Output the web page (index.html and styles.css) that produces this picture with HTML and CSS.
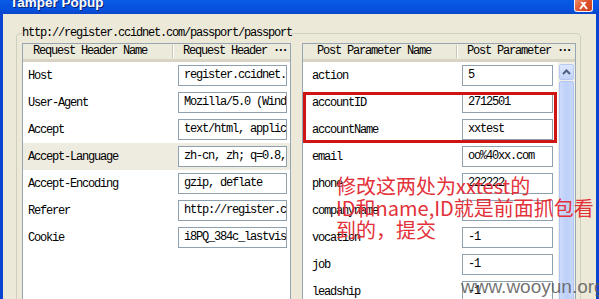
FILE: index.html
```html
<!DOCTYPE html>
<html lang="zh-CN">
<head>
    <meta charset="UTF-8">
    <title>Tamper Popup</title>
    <link rel="stylesheet" href="styles.css">
</head>
<body>
    <div class="win">
        <div class="titlebar">
            <span class="title">Tamper Popup</span>
            <span class="close">
                <svg width="11" height="9" viewBox="0 0 11 9"><path d="M2 -2 L9 7 M9 -2 L2 7" stroke="#fff" stroke-width="2" fill="none"/></svg>
            </span>
        </div>

        <div class="frame">
            <fieldset class="group">
                <legend>http://register.ccidnet.com/passport/passport</legend>
                <div class="panels">
                    <div class="panel left">
                        <div class="head">
                            <div class="hc first">Request Header Name</div>
                            <div class="hc">Request Header <b>···</b></div>
                        </div>
                        <div class="row"><div class="name">Host</div><div class="val">register.ccidnet.com</div></div>
                        <div class="row"><div class="name">User-Agent</div><div class="val">Mozilla/5.0 (Windows NT 5.1)</div></div>
                        <div class="row"><div class="name">Accept</div><div class="val">text/html, application/xhtml+xml</div></div>
                        <div class="row sel"><div class="name">Accept-Language</div><div class="val">zh-cn, zh; q=0.8, en-us</div></div>
                        <div class="row"><div class="name">Accept-Encoding</div><div class="val">gzip,  deflate</div></div>
                        <div class="row"><div class="name">Referer</div><div class="val">http://register.ccidnet.com/</div></div>
                        <div class="row"><div class="name">Cookie</div><div class="val">i8PQ_384c_lastvisit=1354</div></div>
                    </div>

                    <div class="panel right">
                        <div class="head">
                            <div class="hc first">Post Parameter Name</div>
                            <div class="hc">Post Parameter <b>···</b></div>
                        </div>
                        <div class="pbody">
                            <div class="rows">
                                <div class="row"><div class="name">action</div><div class="val">5</div></div>
                                <div class="row"><div class="name">accountID</div><div class="val">2712501</div></div>
                                <div class="row"><div class="name">accountName</div><div class="val">xxtest</div></div>
                                <div class="row"><div class="name">email</div><div class="val">oo%40xx.com</div></div>
                                <div class="row"><div class="name">phone</div><div class="val">222222</div></div>
                                <div class="row"><div class="name">companyname</div><div class="val"></div></div>
                                <div class="row"><div class="name">vocation</div><div class="val">-1</div></div>
                                <div class="row"><div class="name">job</div><div class="val">-1</div></div>
                                <div class="row"><div class="name">leadship</div><div class="val">-1</div></div>
                            </div>
                            <div class="sb">
                                <div class="sb-up">
                                    <svg width="9" height="6" viewBox="0 0 9 6"><path d="M1 5 L4.5 1.5 L8 5" stroke="#4d6185" stroke-width="2" fill="none"/></svg>
                                </div>
                                <div class="sb-thumb"></div>
                            </div>
                        </div>
                    </div>
                </div>
            </fieldset>
        </div>

        <div class="mark-box"></div>
        <p class="note">修改这两处为xxtest的<br>ID和name,ID就是前面抓包看<br>到的，提交</p>
        <div class="watermark">www.wooyun.org</div>
    </div>
</body>
</html>
```

FILE: styles.css
```css
body { margin: 0; background: #ece9d8; overflow: hidden; }
.win { position: relative; width: 599px; height: 299px; display: flex; flex-direction: column; overflow: hidden; font-family: "Liberation Mono", "Noto Sans CJK SC", monospace; font-size: 12px; letter-spacing: -1.2px; color: #000; }

.titlebar { height: 14px; flex: none; display: flex; background: linear-gradient(#0a5ae8, #0650dc 70%, #0a46c8); }
.title { margin: -4px 0 0 10px; font-family: "Liberation Sans", sans-serif; font-weight: bold; font-size: 13.5px; line-height: 13px; letter-spacing: 0; color: #fff; text-shadow: 1px 1px #0a1f6e; }
.close { margin: 0 6px 0 auto; width: 19px; height: 12px; box-sizing: border-box; border: 1px solid #f2f2f2; border-top: 0; border-radius: 0 0 3px 3px; background: linear-gradient(135deg, #f08a6a, #e0522c 50%, #c8401c); display: flex; justify-content: center; align-items: flex-end; }

.frame { flex: 1; border-left: 3px solid #0a44d0; border-right: 3px solid #0a44d0; background: #ece9d8; }

.group { margin: 12px 15px 0 13px; padding: 3px 0 0 5px; border: 1px solid #d0d0bf; border-radius: 4px; height: 300px; min-width: 0; }
.group legend { padding: 0; margin-left: 0; line-height: 14px; }

.panels { display: flex; gap: 11px; }
.panel { box-sizing: border-box; height: 260px; border: 1px solid #98a6b3; background: #fff; overflow: hidden; }
.panel.left { width: 269px; }
.panel.right { width: 274px; }

.head { display: flex; height: 15px; background: #ebeadb; border-bottom: 3px solid #d8d4c4; white-space: nowrap; }
.hc { flex: none; line-height: 15px; padding-left: 10px; }
.hc b { letter-spacing: -3px; }
.hc.first { box-sizing: border-box; height: 13px; margin-top: 1px; line-height: 13px; border-right: 1px solid #c8c5b4; box-shadow: 1px 0 #fff; }
.left .hc.first { width: 150px; }
.right .hc.first { width: 154px; padding-left: 14px; }

.row { display: flex; align-items: center; height: 27px; white-space: nowrap; }
.row.sel { background: #eeebe0; }
.name { box-sizing: border-box; }
.left .name { width: 150px; padding-left: 5px; }
.right .name { width: 154px; padding-left: 9px; }
.val { box-sizing: border-box; height: 21px; margin-left: 5px; padding-left: 5px; border: 1px solid #8fa0ae; background: #fff; line-height: 19px; overflow: hidden; }
.left .val { width: 109px; }
.right .val { width: 91px; }

.pbody { display: flex; }
.rows { flex: 1; }
.sb { width: 17px; height: 240px; display: flex; flex-direction: column; background: #f1efe6; }
.sb-up { height: 16px; margin: 2px 1px 1px; box-sizing: border-box; border: 1px solid #b7c9f2; border-radius: 2px; background: linear-gradient(#dde7fd, #c3d4fa); display: flex; justify-content: center; align-items: center; }
.sb-thumb { flex: 1; margin: 0 1px; border: 1px solid #b2c6f4; border-radius: 2px; background: linear-gradient(90deg, #cddbfb, #bdd0f9 50%, #c9d8fb); }

.mark-box { position: absolute; left: 303px; top: 92px; width: 254px; height: 51px; box-sizing: border-box; border: 3px solid #cf1414; }
.note { position: absolute; left: 336px; top: 175px; margin: 0; font-family: "Noto Sans CJK SC", sans-serif; font-size: 20px; line-height: 22px; letter-spacing: 0; color: #e3313a; }
.watermark { position: absolute; left: 461px; top: 277px; font-family: "Liberation Sans", sans-serif; font-size: 19px; line-height: 19px; letter-spacing: 0; color: rgba(90, 90, 90, 0.85); }
```
